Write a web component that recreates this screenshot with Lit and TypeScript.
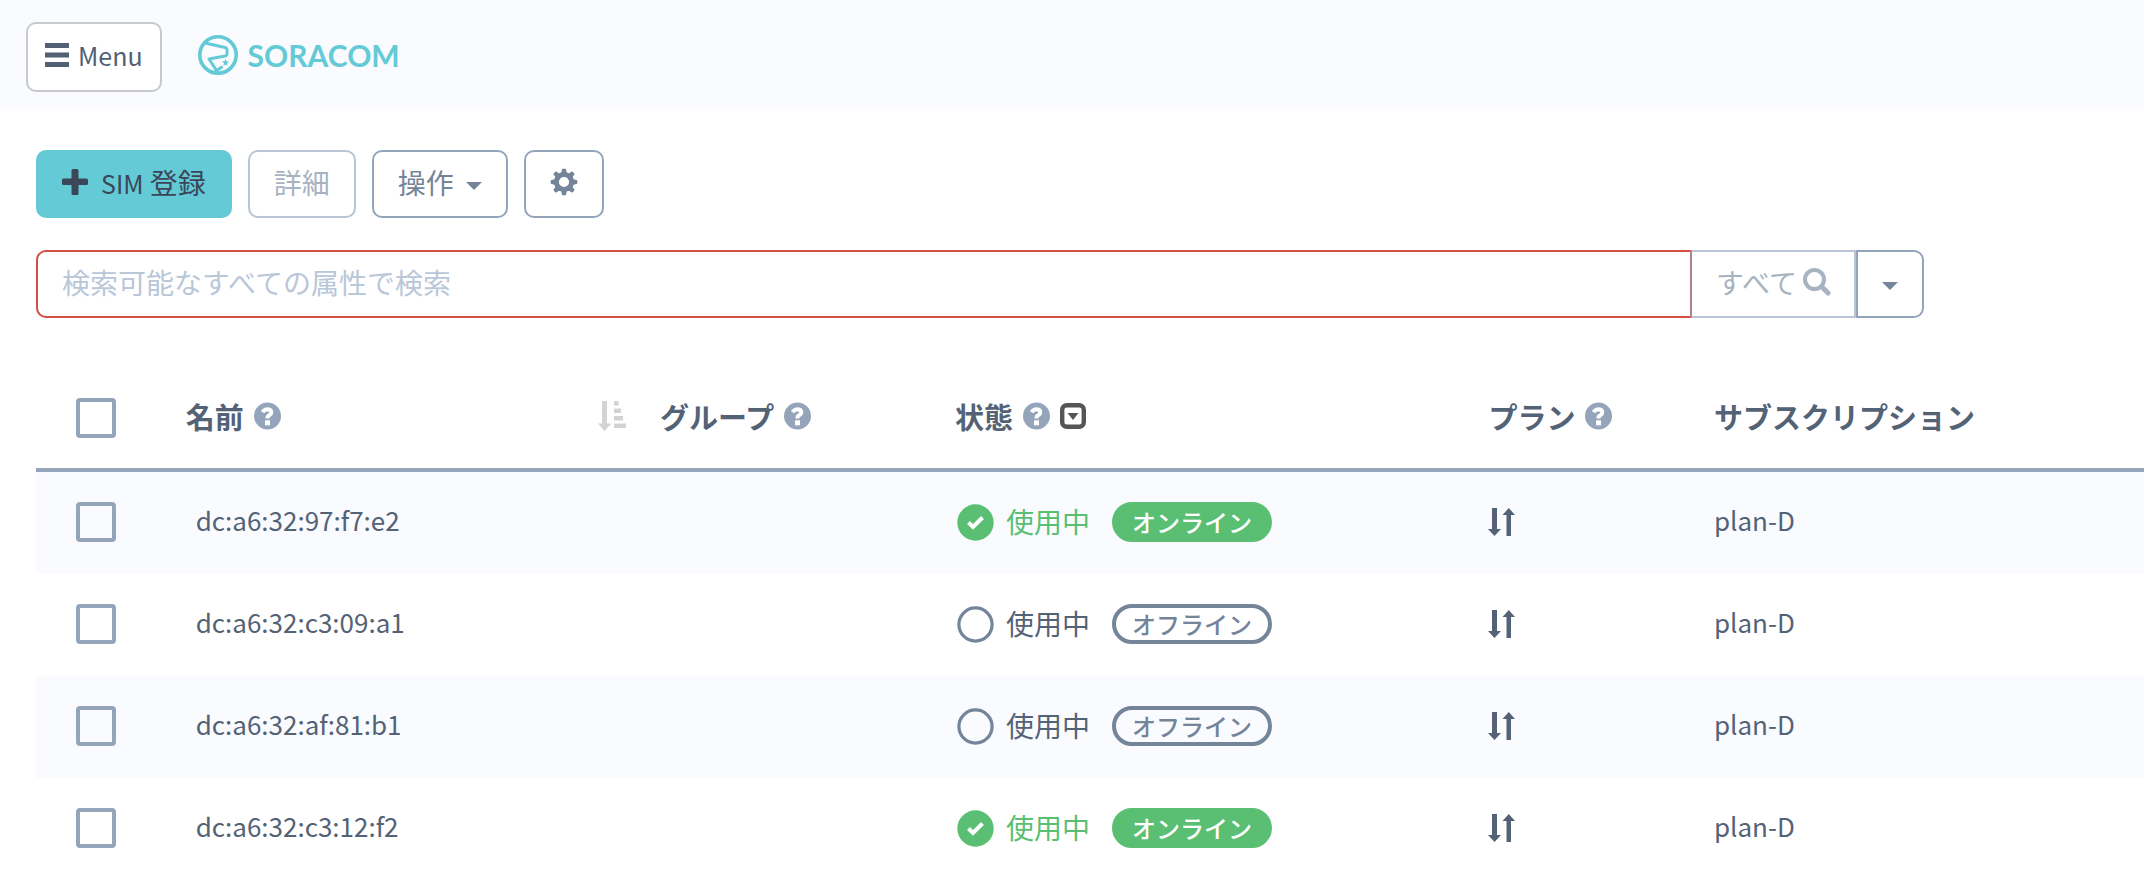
import { LitElement, html, css, svg } from "lit";
import { customElement, state } from "lit/decorators.js";

interface Sim {
  name: string;
  online: boolean;
  plan: string;
}

const SIMS: Sim[] = [
  { name: "dc:a6:32:97:f7:e2", online: true, plan: "plan-D" },
  { name: "dc:a6:32:c3:09:a1", online: false, plan: "plan-D" },
  { name: "dc:a6:32:af:81:b1", online: false, plan: "plan-D" },
  { name: "dc:a6:32:c3:12:f2", online: true, plan: "plan-D" },
];

const menuIcon = html`<svg width="24" height="24" viewBox="0 0 24 24" aria-hidden="true">
  <path fill="currentColor" d="M0 0h24v5H0zM0 9.5h24v5H0zM0 19h24v5H0z" />
</svg>`;

const plusIcon = html`<svg width="26" height="26" viewBox="0 0 26 26" aria-hidden="true">
  <path fill="currentColor" d="M11 0h4q1.500 0 1.500 1.500v8h8q1.500 0 1.500 1.500v3.500q0 1.500-1.500 1.500h-8v8.500q0 1.500-1.500 1.500h-4q-1.500 0-1.500-1.500V16h-8Q0 16 0 14.500V11q0-1.500 1.500-1.500h8v-8Q9.500 0 11 0z" />
</svg>`;

const logoMark = html`<svg width="40" height="42" viewBox="0 0 40 42" fill="none" stroke="currentColor" aria-hidden="true">
  <circle cx="20" cy="21" r="18.200" stroke-width="3.600" />
  <path stroke-width="3" stroke-linejoin="round" d="M5 8.500L27 13.500Q29 14 29 16L29 20Q29 21.500 27 22L11 25L19.500 38" />
  <path stroke-width="3" d="M17 38L24.500 32.500" />
  <path fill="currentColor" stroke="none" d="M27.500 25l1 2.300 2.500.3-2 1.600.6 2.500-2.100-1.300-2.100 1.300.6-2.500-2-1.600 2.500-.3z" />
</svg>`;

const caretIcon = html`<svg class="caret" width="16" height="8" viewBox="0 0 16 8" aria-hidden="true">
  <path fill="currentColor" d="M0 0h16L8 8z" />
</svg>`;

const teeth = [0, 45, 90, 135, 180, 225, 270, 315];
const gearIcon = html`<svg width="28" height="28" viewBox="0 0 28 28" aria-hidden="true">
  <circle cx="14" cy="14" r="7.600" fill="none" stroke="currentColor" stroke-width="5" />
  ${teeth.map(
    (a) => svg`<path fill="currentColor" transform="rotate(${a} 14 14)" d="M11.300 5l.6-3.400q.2-.9 1-.9h2.200q.8 0 1 .9l.6 3.400z" />`
  )}
</svg>`;

const searchIcon = html`<svg width="28" height="28" viewBox="0 0 28 28" fill="none" stroke="currentColor" aria-hidden="true">
  <circle cx="11.500" cy="11.500" r="9.500" stroke-width="4" />
  <path stroke-width="5" stroke-linecap="round" d="M19 19l6 6" />
</svg>`;

const helpIcon = html`<svg class="help" width="27" height="28" viewBox="0 0 27 28" role="img" aria-label="help">
  <circle cx="13.500" cy="14" r="13.500" fill="currentColor" />
  <path fill="none" stroke="#fff" stroke-width="4" d="M8.500 10.200Q10.500 7.200 13.700 7.200Q17.300 7.500 17.300 10.400Q17.300 12 15.200 13.200Q13.400 14.200 13.400 16.500" />
  <path fill="#fff" d="M11 18.300h5v5h-5z" />
</svg>`;

const sortIcon = html`<svg width="28" height="30" viewBox="0 0 28 30" aria-hidden="true">
  <path fill="currentColor" d="M4 0h5v22.500h4.500L6.500 30 0 22.500h4zM16 0h4.500v4.500H16zM16 7.500h7V12h-7zM16 15h9v4.500h-9zM16 22.500h12V27H16z" />
</svg>`;

const filterIcon = html`<svg width="26" height="26" viewBox="0 0 26 26" aria-hidden="true">
  <rect x="2.200" y="2.200" width="21.600" height="21.600" rx="4.500" fill="none" stroke="currentColor" stroke-width="4.400" />
  <path fill="currentColor" d="M7.500 10h11L13 17z" />
</svg>`;

const updownIcon = html`<svg width="28" height="28" viewBox="0 0 28 28" aria-hidden="true">
  <path fill="currentColor" d="M4 0h5v21h4L6.500 28 0 21h4zM18.500 28h4.500V7H27L20.800 0 14.500 7h4z" />
</svg>`;

const activeIcon = html`<svg width="37" height="37" viewBox="0 0 37 37" aria-hidden="true">
  <circle cx="18.500" cy="18.500" r="18.200" fill="currentColor" />
  <path fill="none" stroke="#fff" stroke-width="4" d="M11.500 18.500l4.500 4.500 9.500-9.500" />
</svg>`;

const idleIcon = html`<svg class="idle" width="37" height="37" viewBox="0 0 37 37" aria-hidden="true">
  <circle cx="18.500" cy="18.500" r="16.600" fill="none" stroke="currentColor" stroke-width="3.200" />
</svg>`;

@customElement("app-root")
export class AppRoot extends LitElement {
  @state() private selected = new Set<string>();

  static styles = css`
    :host {
      display: block;
      height: 100vh;
      overflow: auto;
      scrollbar-width: none;
      background: #fff;
      color: #546276;
      font-family: "Noto Sans CJK JP", sans-serif;
      font-size: 28px;
      line-height: 40px;
    }
    * {
      box-sizing: border-box;
    }
    svg {
      display: block;
      flex: none;
    }
    button,
    input {
      margin: 0;
      font: inherit;
    }
    .topbar {
      display: flex;
      align-items: center;
      gap: 36px;
      padding: 22px 26px 17px;
      background: #f9fbff;
    }
    .btn {
      display: flex;
      align-items: center;
      justify-content: center;
      height: 68px;
      padding: 0 24px 4px;
      border: 2px solid #94a5bb;
      border-radius: 10px;
      background: #fff;
      color: #748499;
    }
    .menu {
      gap: 9px;
      height: 70px;
      padding: 0 17px 4px;
      border-color: #c8c9cb;
      color: #525f75;
      font-size: 25px;
    }
    .logo {
      display: flex;
      align-items: center;
      gap: 10px;
      padding-bottom: 4px;
      color: #64cad6;
      font-family: Lato, sans-serif;
      font-size: 30px;
      font-weight: 700;
      text-decoration: none;
    }
    .content {
      padding: 41px 0 0 36px;
    }
    .toolbar {
      display: flex;
      gap: 16px;
    }
    .primary {
      gap: 13px;
      border-color: #64cad6;
      background: #64cad6;
      color: #3b4759;
    }
    .latin {
      font-size: 25px;
    }
    .btn:disabled {
      border-color: #b9c5d5;
      color: #a8b3c1;
    }
    .action {
      gap: 12px;
    }
    .caret {
      margin-top: 8px;
    }
    .search {
      display: flex;
      margin: 32px 220px 0 0;
    }
    .query {
      flex: 1;
      min-width: 0;
      height: 68px;
      padding: 0 24px 4px;
      border: 2px solid #d34f43;
      border-right-color: #ad7f8a;
      border-radius: 10px 0 0 10px;
      background: #fff;
      color: #546276;
      outline: none;
    }
    .query::placeholder {
      color: #b9c7d9;
      opacity: 1;
    }
    .btn.scope {
      gap: 6px;
      padding-right: 23px;
      border-left: 0;
      border-radius: 0;
    }
    .more {
      border-radius: 0 10px 10px 0;
    }
    table {
      width: 100%;
      margin-top: 52px;
      border-spacing: 0;
      table-layout: fixed;
    }
    .c-check {
      width: 7.1%;
    }
    .c-name {
      width: 22.5%;
    }
    .c-group {
      width: 14%;
    }
    .c-status {
      width: 25.3%;
    }
    .c-plan {
      width: 10.7%;
    }
    th,
    td {
      height: 102px;
      padding: 0 0 2px;
      text-align: left;
      vertical-align: middle;
      font-size: 26px;
      white-space: nowrap;
    }
    th {
      border-bottom: 4px solid #94a5bb;
      font-size: 29px;
      font-weight: 700;
    }
    tbody tr:nth-child(odd) {
      background: #f9fbff;
    }
    .pick {
      display: flex;
      padding-left: 40px;
    }
    .box {
      appearance: none;
      width: 40px;
      height: 40px;
      border: 4px solid #94a5bb;
      border-radius: 4px;
    }
    .box:checked {
      background: #94a5bb;
    }
    .head {
      display: flex;
      align-items: center;
      gap: 10px;
      padding-bottom: 4px;
    }
    .help {
      color: #94a5bb;
    }
    .icon-btn {
      padding: 0;
      border: 0;
      background: none;
      color: #555;
    }
    .sort {
      margin: 0 34px 0 auto;
      color: #d3d3d3;
    }
    .text {
      padding-bottom: 4px;
    }
    .name {
      padding-left: 10px;
    }
    .status {
      display: flex;
      align-items: center;
      gap: 12px;
      padding-left: 2px;
      font-size: 28px;
    }
    .state {
      padding-bottom: 2px;
    }
    .on {
      color: #5abf72;
    }
    .idle {
      color: #748499;
    }
    .badge {
      margin-left: 10px;
      padding: 0 16px;
      border: 4px solid #748499;
      border-radius: 20px;
      color: #748499;
      font-size: 24px;
      font-weight: 500;
      line-height: 32px;
    }
    .on .badge {
      border-color: #5abf72;
      background: #5abf72;
      color: #fff;
    }
  `;

  private toggle(name: string) {
    const next = new Set(this.selected);
    next.has(name) ? next.delete(name) : next.add(name);
    this.selected = next;
  }

  private toggleAll() {
    this.selected = this.selected.size === SIMS.length ? new Set() : new Set(SIMS.map((s) => s.name));
  }

  private row(sim: Sim) {
    return html`<tr>
      <td>
        <div class="pick">
          <input
            class="box"
            type="checkbox"
            aria-label=${sim.name}
            .checked=${this.selected.has(sim.name)}
            @change=${() => this.toggle(sim.name)}
          />
        </div>
      </td>
      <td><div class="text name">${sim.name}</div></td>
      <td></td>
      <td>
        <div class="status ${sim.online ? "on" : ""}">
          ${sim.online ? activeIcon : idleIcon}
          <span class="state">使用中</span>
          <span class="badge">${sim.online ? "オンライン" : "オフライン"}</span>
        </div>
      </td>
      <td>${updownIcon}</td>
      <td><div class="text">${sim.plan}</div></td>
    </tr>`;
  }

  render() {
    return html`
      <header class="topbar">
        <button class="btn menu" type="button">${menuIcon}<span>Menu</span></button>
        <a class="logo" href="#">${logoMark}<span>SORACOM</span></a>
      </header>
      <main class="content">
        <div class="toolbar">
          <button class="btn primary" type="button">
            ${plusIcon}<span><span class="latin">SIM</span> 登録</span>
          </button>
          <button class="btn" type="button" disabled>詳細</button>
          <button class="btn action" type="button"><span>操作</span>${caretIcon}</button>
          <button class="btn" type="button" aria-label="設定">${gearIcon}</button>
        </div>
        <form class="search" @submit=${(e: Event) => e.preventDefault()}>
          <input class="query" type="text" aria-label="検索" placeholder="検索可能なすべての属性で検索" />
          <button class="btn scope" type="submit" disabled><span>すべて</span>${searchIcon}</button>
          <button class="btn more" type="button" aria-label="検索対象">${caretIcon}</button>
        </form>
        <table>
          <colgroup>
            <col class="c-check" />
            <col class="c-name" />
            <col class="c-group" />
            <col class="c-status" />
            <col class="c-plan" />
            <col />
          </colgroup>
          <thead>
            <tr>
              <th>
                <div class="pick">
                  <input
                    class="box"
                    type="checkbox"
                    aria-label="すべて選択"
                    .checked=${this.selected.size === SIMS.length}
                    @change=${this.toggleAll}
                  />
                </div>
              </th>
              <th>
                <div class="head">
                  <span>名前</span>${helpIcon}
                  <button class="icon-btn sort" type="button" aria-label="並べ替え">${sortIcon}</button>
                </div>
              </th>
              <th><div class="head"><span>グループ</span>${helpIcon}</div></th>
              <th>
                <div class="head">
                  <span>状態</span>${helpIcon}
                  <button class="icon-btn" type="button" aria-label="絞り込み">${filterIcon}</button>
                </div>
              </th>
              <th><div class="head"><span>プラン</span>${helpIcon}</div></th>
              <th><div class="head">サブスクリプション</div></th>
            </tr>
          </thead>
          <tbody>
            ${SIMS.map((sim) => this.row(sim))}
          </tbody>
        </table>
      </main>
    `;
  }
}
